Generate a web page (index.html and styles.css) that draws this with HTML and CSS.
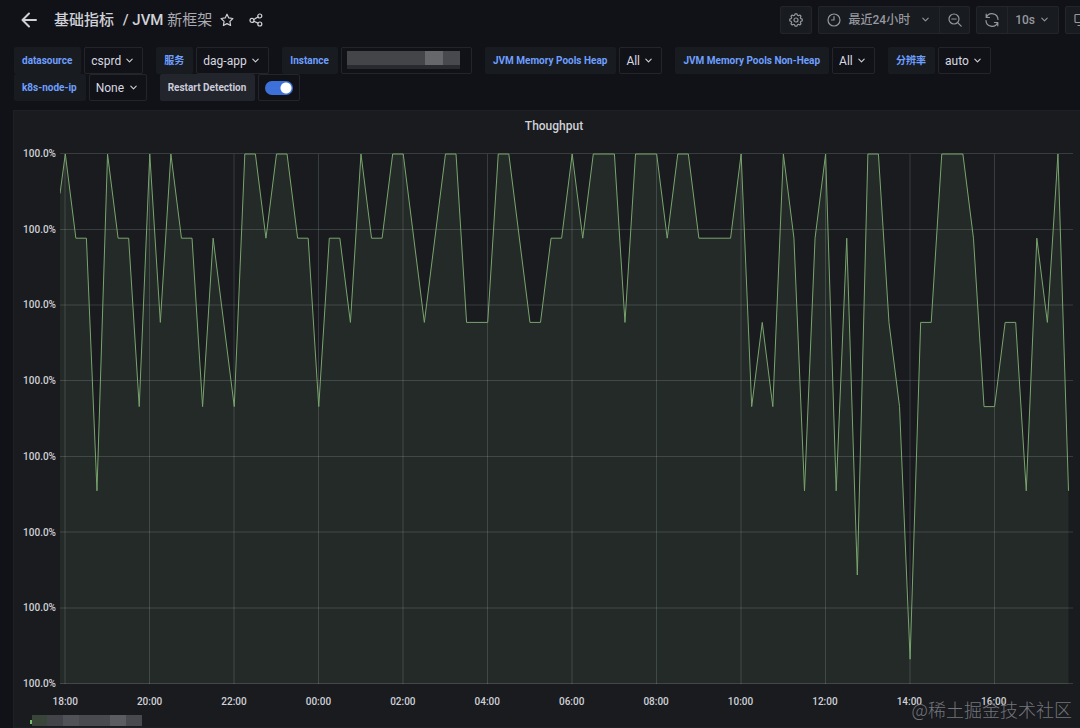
FILE: index.html
```html
<!DOCTYPE html>
<html lang="zh-CN">
<head>
<meta charset="utf-8">
<meta name="viewport" content="width=device-width, initial-scale=1">
<title>基础指标 / JVM 新框架</title>
<link rel="stylesheet" href="styles.css">
</head>
<body>
<svg class="defs" aria-hidden="true">
  <symbol id="chevron" viewBox="0 0 10 10"><path d="M2 3.5 5 6.5 8 3.5"/></symbol>
</svg>
<header class="topbar">
  <button class="plain back" aria-label="返回"><svg class="icon-lg" viewBox="0 0 16 16"><path d="M15 8H1.5M8 1.5 1.5 8 8 14.5"/></svg></button>
  <h1 class="title"><a href="#">基础指标</a> <a href="#" class="leaf"> / JVM <span class="thin">新框架</span></a></h1>
  <button class="plain" aria-label="收藏"><svg class="icon" viewBox="0 0 14 14"><path d="M7 1.2 8.8 4.9 12.9 5.5 9.9 8.4 10.6 12.5 7 10.6 3.4 12.5 4.1 8.4 1.1 5.5 5.2 4.9Z"/></svg></button>
  <button class="plain share" aria-label="分享"><svg class="icon" viewBox="0 0 14 14"><circle cx="3" cy="7.4" r="2"/><circle cx="10.8" cy="3" r="2"/><circle cx="10.8" cy="11" r="2"/><path d="M4.8 6.4 9 4M4.8 8.3 9 10.1"/></svg></button>
  <div class="tools">
    <div class="group"><button class="tool square" aria-label="设置"><svg class="icon" viewBox="0 0 14 14"><path d="M5.6 2.2 6 .8H8L8.4 2.2 9.5 2.7 10.8 2 12 3.2 11.3 4.5 11.8 5.6 13.2 6V8L11.8 8.4 11.3 9.5 12 10.8 10.8 12 9.5 11.3 8.4 11.8 8 13.2H6L5.6 11.8 4.5 11.3 3.2 12 2 10.8 2.7 9.5 2.2 8.4.8 8V6L2.2 5.6 2.7 4.5 2 3.2 3.2 2 4.5 2.7Z"/><circle cx="7" cy="7" r="2"/></svg></button></div>
    <div class="group">
      <button class="tool range"><svg class="icon" viewBox="0 0 14 14"><circle cx="7" cy="7" r="6"/><path d="M7 3.5V7H4.5"/></svg><span>最近24小时</span><svg class="chev"><use href="#chevron"/></svg></button>
      <button class="tool square" aria-label="缩小"><svg class="icon" viewBox="0 0 14 14"><circle cx="6" cy="6" r="5"/><path d="M3.8 6H8.2M9.7 9.7 13.2 13.2"/></svg></button>
    </div>
    <div class="group">
      <button class="tool square" aria-label="刷新"><svg class="icon" viewBox="0 0 14 14"><path d="M1.2 1.2V4.5H4.5M1.5 4.3A6 6 0 0 1 13 6.5M12.8 12.8V9.5H9.5M12.5 9.7A6 6 0 0 1 1 7.5"/></svg></button>
      <button class="tool interval"><span>10s</span><svg class="chev"><use href="#chevron"/></svg></button>
    </div>
    <div class="group"><button class="tool square" aria-label="显示模式"><svg class="icon" viewBox="0 0 14 14"><rect x="1" y="1.5" width="12" height="8" rx="1"/><path d="M4 12.5H10M7 9.5V12.5"/></svg></button></div>
  </div>
</header>

<form class="vars">
  <div class="var"><label class="name" for="v1">datasource</label><div class="value"><select id="v1"><option>csprd</option></select><svg class="chev"><use href="#chevron"/></svg></div></div>
  <div class="var"><label class="name" for="v2">服务</label><div class="value"><select id="v2"><option>dag-app</option></select><svg class="chev"><use href="#chevron"/></svg></div></div>
  <div class="var"><label class="name" for="v3">Instance</label><div class="value masked"><select id="v3" class="mosaic"><option></option></select></div></div>
  <div class="var"><label class="name" for="v4">JVM Memory Pools Heap</label><div class="value"><select id="v4"><option>All</option></select><svg class="chev"><use href="#chevron"/></svg></div></div>
  <div class="var"><label class="name" for="v5">JVM Memory Pools Non-Heap</label><div class="value"><select id="v5"><option>All</option></select><svg class="chev"><use href="#chevron"/></svg></div></div>
  <div class="var"><label class="name" for="v6">分辨率</label><div class="value"><select id="v6"><option>auto</option></select><svg class="chev"><use href="#chevron"/></svg></div></div>
  <div class="var"><label class="name" for="v7">k8s-node-ip</label><div class="value"><select id="v7"><option>None</option></select><svg class="chev"><use href="#chevron"/></svg></div></div>
  <div class="var"><label class="name annotation" for="v8">Restart Detection</label><div class="value switch"><input id="v8" type="checkbox" checked></div></div>
</form>

<main class="panel">
  <h2 class="panel-title">Thoughput</h2>
  <div class="chart">
    <div class="y-axis"><span>100.0%</span><span>100.0%</span><span>100.0%</span><span>100.0%</span><span>100.0%</span><span>100.0%</span><span>100.0%</span><span>100.0%</span></div>
    <svg class="plot" viewBox="0 0 1013 532" role="img" aria-label="Thoughput">
      <path class="fill" transform="translate(5.3 1) scale(10.56 84.2)" d="M-.5 .47 0 0 1 1 2 1 3 4 4 0 5 1 6 1 7 3 8 0 9 2 10 0 11 1 12 1 13 3 14 1 16 3 17 0 18 0 19 1 20 0 21 0 22 1 23 1 24 3 25 1 26 1 27 2 28 0 29 1 30 1 31 0 32 0 34 2 36 0 37 0 38 2 40 2 41 0 42 0 44 2 45 2 46 1 47 1 48 0 49 1 50 0 52 0 53 2 54 0 56 0 57 1 58 0 59 0 60 1 63 1 64 0 65 3 66 2 67 3 68 0 69 1 70 4 71 1 72 0 73 4 74 1 75 5 76 0 77 0 78 2 79 3 80 6 81 2 82 2 83 0 85 0 86 1 87 3 88 3 89 2 90 2 91 4 92 1 93 2 94 0 95 4V6.295H-.5Z"/>
      <path class="grid" d="M0 .5H1013M0 76.5H1013M0 152H1013M0 227.5H1013M0 303.5H1013M0 379H1013M0 455H1013M0 530.5H1013M5 1V531M89.5 1V531M174 1V531M258.5 1V531M343 1V531M427.5 1V531M512 1V531M596.5 1V531M681 1V531M765.5 1V531M850 1V531M934.5 1V531"/>
      <path class="line" transform="translate(5.3 1) scale(10.56 84.2)" d="M-.5 .47 0 0 1 1 2 1 3 4 4 0 5 1 6 1 7 3 8 0 9 2 10 0 11 1 12 1 13 3 14 1 16 3 17 0 18 0 19 1 20 0 21 0 22 1 23 1 24 3 25 1 26 1 27 2 28 0 29 1 30 1 31 0 32 0 34 2 36 0 37 0 38 2 40 2 41 0 42 0 44 2 45 2 46 1 47 1 48 0 49 1 50 0 52 0 53 2 54 0 56 0 57 1 58 0 59 0 60 1 63 1 64 0 65 3 66 2 67 3 68 0 69 1 70 4 71 1 72 0 73 4 74 1 75 5 76 0 77 0 78 2 79 3 80 6 81 2 82 2 83 0 85 0 86 1 87 3 88 3 89 2 90 2 91 4 92 1 93 2 94 0 95 4"/>
    </svg>
  </div>
  <div class="x-axis"><span>18:00</span><span>20:00</span><span>22:00</span><span>00:00</span><span>02:00</span><span>04:00</span><span>06:00</span><span>08:00</span><span>10:00</span><span>12:00</span><span>14:00</span><span>16:00</span></div>
  <div class="legend"><i class="dot"></i><i class="mosaic-legend"></i></div>
</main>
<div class="watermark">@稀土掘金技术社区</div>
</body>
</html>
```
FILE: styles.css
```css
* { box-sizing: border-box; }
body {
  margin: 0;
  min-height: 100vh;
  display: flex;
  flex-direction: column;
  position: relative;
  overflow: hidden;
  background: #111217;
  color: #d0d1d8;
  font: 12px/16px Roboto, "Noto Sans CJK SC", sans-serif;
}
button, select, input { font: inherit; color: inherit; margin: 0; }
button { cursor: pointer; }
svg { fill: none; stroke: currentColor; stroke-linecap: round; stroke-linejoin: round; flex: none; }
.defs { position: absolute; width: 0; height: 0; }
.icon { width: 14px; height: 14px; display: block; stroke-width: 1.2; }
.icon-lg { width: 16px; height: 16px; display: block; stroke-width: 2; }
.chev { width: 9px; height: 9px; stroke-width: 1.2; pointer-events: none; }

.topbar { display: flex; align-items: center; height: 39px; padding-left: 21px; margin-right: -17px; }
.plain { padding: 0; border: 0; background: none; }
.share { margin-left: 15px; }
.title { margin: 0 8px 0 17px; font-size: 15px; line-height: 20px; font-weight: 500; white-space: nowrap; }
.title a { color: inherit; text-decoration: none; }
.title .leaf { margin-left: 5px; }
.thin { font-weight: 400; color: #a9aab2; }
.tools { display: flex; gap: 6px; margin-left: auto; color: #96979f; }
.group { display: flex; border: 1px solid #23252b; border-radius: 2px; background: #181b1f; }
.tool { display: flex; align-items: center; height: 26px; border: 0; background: none; font-weight: 500; }
.tool + .tool { border-left: 1px solid #23252b; }
.square { width: 30px; justify-content: center; padding: 0; }
.range { padding: 0 9px 0 8px; gap: 8px; }
.range .chev { margin-left: 3px; }
.interval { padding: 0 9px 0 7px; gap: 5px; }

.vars { display: flex; flex-wrap: wrap; gap: 0 13px; padding: 8px 14px 0; }
.var { display: flex; gap: 3px; height: 27px; }
.name { display: flex; align-items: center; padding: 0 9px 0 8px; background: #181b1f; border-radius: 2px; color: #6e9fff; font-size: 10px; font-weight: 700; white-space: nowrap; }
.annotation { background: #22252b; color: #ccccdc; }
.value { display: flex; align-items: center; gap: 4px; padding: 0 8px 0 6px; border: 1px solid #23252b; border-radius: 2px; }
.value select { appearance: none; border: 0; padding: 0; background: none; color: #d8d9e0; line-height: 16px; }
.masked { width: 131px; padding: 0 11px 0 5px; }
.value .mosaic { width: 113px; height: 18px; margin-bottom: 2px; background: linear-gradient(90deg, #444549 0 78px, #66676b 78px 96px, #48494e 96px); border-bottom: 4px solid #292a2f; }
.switch { padding: 0 6px; }
.switch input { appearance: none; width: 28px; height: 14px; border-radius: 7px; background: radial-gradient(circle at 21px 7px, #fff 5px, transparent 6px) #3d71d9; }

.panel { flex: 1; margin: 9px -15px 0 13px; border: 1px solid #1e2025; background: #191b1f; }
.panel-title { margin: 6px 0 0; text-align: center; font-size: 12px; line-height: 18px; font-weight: 500; color: #d0d1d8; }
.chart { display: flex; gap: 4px; padding: 18px 21px 0 8px; }
.y-axis { display: flex; flex-direction: column; justify-content: space-between; width: 34px; margin: -7px 0; text-align: right; white-space: nowrap; font-size: 10px; line-height: 16px; font-weight: 500; }
.plot { display: block; flex: 1; min-width: 0; height: auto; }
.plot path { vector-effect: non-scaling-stroke; stroke-linejoin: miter; stroke-linecap: butt; }
.plot .fill { fill: #88ac80; fill-opacity: .1; stroke: none; }
.grid { stroke: #dceee4; stroke-opacity: .16; }
.line { stroke: #79a56d; stroke-linejoin: bevel; }
.x-axis { display: grid; grid-template-columns: repeat(12, 1fr); padding: 9px 58px 0 9px; text-align: center; font-size: 10px; line-height: 16px; font-weight: 500; }
.legend { display: flex; align-items: flex-end; padding: 5px 16px 0; }
.dot { width: 2px; height: 4px; margin-bottom: 2px; background: #73bf69; }
.mosaic-legend { width: 110px; height: 11px; background: linear-gradient(90deg, #3a4539 0 15px, #434449 15px 31px, #515257 31px 47px, #494a4f 47px 78px, #5b5c61 78px 94px, #48494e 94px); }
.watermark { position: absolute; right: 8px; bottom: 7px; color: #74757b; font: 18px/24px "Noto Sans CJK SC", sans-serif; font-weight: 300; white-space: nowrap; pointer-events: none; }
```
